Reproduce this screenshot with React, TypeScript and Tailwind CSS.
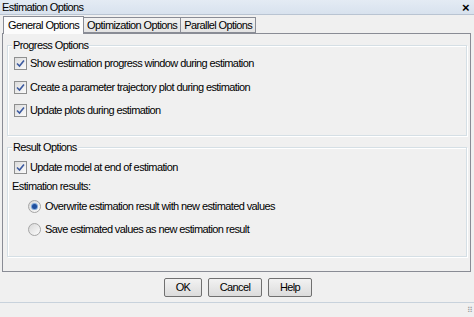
import React from "react";

const Check = () => (
  <span className="w-[13px] h-[13px] border border-[#8e8f8f] bg-gradient-to-br from-[#dcdcdc] to-[#fbfbfb] flex items-center justify-center shrink-0">
    <svg width="9" height="9" viewBox="0 0 9 9">
      <path d="M1 4.5 L3.5 7 L8 1.5" fill="none" stroke="#3c5aa0" strokeWidth="1.6" />
    </svg>
  </span>
);

const Radio = ({ on }: { on?: boolean }) => (
  <span className="w-[13px] h-[13px] rounded-full border border-[#a5a5a5] bg-gradient-to-br from-[#d8d8d8] to-[#fcfcfc] flex items-center justify-center shrink-0">
    {on && <span className="w-[5px] h-[5px] rounded-full bg-[#1f4f9e] shadow-[0_0_0_1px_#7ea6d8]" />}
  </span>
);

const Group = ({ title, children, className }: { title: string; children: React.ReactNode; className?: string }) => (
  <div className={"relative border border-[#d5dfe5] shadow-[inset_1px_1px_0_#fff,1px_1px_0_#fff] " + (className ?? "")}>
    <span className="absolute -top-[7px] left-[4px] px-[1px] bg-[#f0f0f0] leading-[13px]">{title}</span>
    {children}
  </div>
);

const Btn = ({ label, w }: { label: string; w: string }) => (
  <button className={"h-[19px] border border-[#707070] rounded-[2px] bg-gradient-to-b from-[#f2f2f2] to-[#dcdcdc] text-[11px] leading-[13px] text-black tracking-[-0.6px] " + w}>
    {label}
  </button>
);

export default function App() {
  return (
    <div className="w-[474px] h-[317px] bg-[#f0f0f0] flex flex-col text-[11px] leading-[13px] tracking-[-0.6px] text-black overflow-hidden" style={{ fontFamily: "'Liberation Sans', Arial, sans-serif" }}>
      <div className="h-[15px] shrink-0 bg-gradient-to-b from-[#e4ebf4] to-[#d8e2ee] border-b border-[#b9c4d2] flex items-center justify-between px-[2px]">
        <span>Estimation Options</span>
        <span className="pr-[3px] text-[13px] font-bold">×</span>
      </div>
      <div className="flex items-end pl-[3px] h-[18px] shrink-0">
        <div className="h-[18px] px-[4px] border border-b-0 border-[#898c95] bg-[#fcfcfc] flex items-center -mb-px relative z-10">General Options</div>
        <div className="h-[16px] px-[3px] border border-l-0 border-[#898c95] bg-gradient-to-b from-[#f2f2f2] to-[#e3e3e3] flex items-center">Optimization Options</div>
        <div className="h-[16px] px-[3px] border border-l-0 border-[#898c95] bg-gradient-to-b from-[#f2f2f2] to-[#e3e3e3] flex items-center">Parallel Options</div>
      </div>
      <div className="ml-[2px] mr-[3px] h-[239px] shrink-0 border border-[#898c95] flex flex-col pl-[4px] pr-[3px] pt-[11px] gap-[11px]">
        <Group title="Progress Options" className="h-[91px] pl-[6px] pt-[11px] flex flex-col gap-[10px]">
          <label className="flex items-center gap-[3px]"><Check />Show estimation progress window during estimation</label>
          <label className="flex items-center gap-[3px] mt-[1px]"><Check />Create a parameter trajectory plot during estimation</label>
          <label className="flex items-center gap-[3px]"><Check />Update plots during estimation</label>
        </Group>
        <Group title="Result Options" className="h-[110px] pl-[6px] pt-[13px] flex flex-col">
          <label className="flex items-center gap-[3px]"><Check />Update model at end of estimation</label>
          <span className="mt-[6px] -ml-[2px]">Estimation results:</span>
          <div className="flex flex-col gap-[10px] pl-[14px] mt-[7px]">
            <label className="flex items-center gap-[4px]"><Radio on />Overwrite estimation result with new estimated values</label>
            <label className="flex items-center gap-[4px]"><Radio />Save estimated values as new estimation result</label>
          </div>
        </Group>
      </div>
      <div className="h-[30px] shrink-0 flex items-center justify-center gap-[6px] pl-[2px]">
        <Btn label="OK" w="w-[38px]" />
        <Btn label="Cancel" w="w-[54px]" />
        <Btn label="Help" w="w-[44px]" />
      </div>
      <div className="flex-1 border-t border-[#c8d2dc] relative">
        <span className="absolute right-[2px] bottom-[2px] text-[8px] leading-none text-[#999]">⠿</span>
      </div>
    </div>
  );
}
